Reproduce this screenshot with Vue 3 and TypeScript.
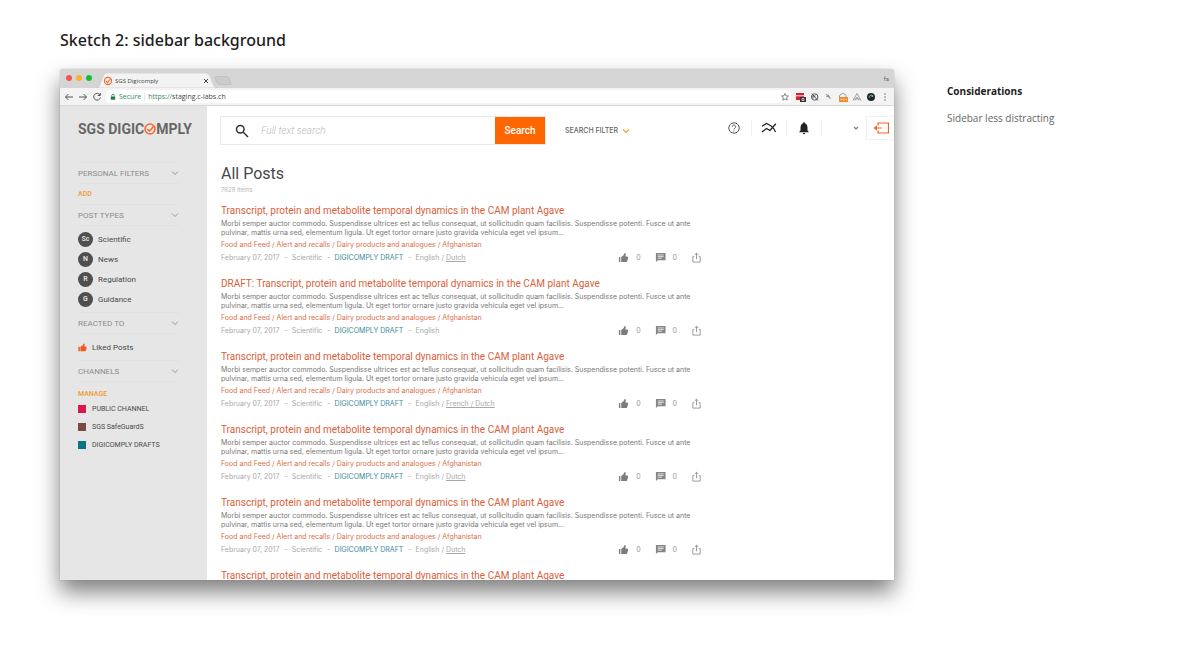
<script setup lang="ts">
import { ref } from 'vue'

interface Post {
  title: string
  languages?: string
  translations?: string
}

const query = ref('')
const baseTitle = 'Transcript, protein and metabolite temporal dynamics in the CAM plant Agave'

const posts: Post[] = [
  { title: baseTitle, languages: 'English', translations: 'Dutch' },
  { title: 'DRAFT: ' + baseTitle, languages: 'English' },
  { title: baseTitle, languages: 'English', translations: 'French / Dutch' },
  { title: baseTitle, languages: 'English', translations: 'Dutch' },
  { title: baseTitle, languages: 'English', translations: 'Dutch' },
  { title: baseTitle },
]

const postTypes = [
  { badge: 'Sc', label: 'Scientific' },
  { badge: 'N', label: 'News' },
  { badge: 'R', label: 'Regulation' },
  { badge: 'G', label: 'Guidance' },
]

const channels = [
  { tone: 'red', label: 'PUBLIC CHANNEL' },
  { tone: 'brown', label: 'SGS SafeGuardS' },
  { tone: 'teal', label: 'DIGICOMPLY DRAFTS' },
]
</script>

<template>
  <div class="page">
    <h1 class="heading">Sketch 2: sidebar background</h1>
    <div class="columns">
      <section class="window">
        <div class="tabs">
          <div class="lights"><i class="close"></i><i class="min"></i><i class="max"></i></div>
          <div class="tab">
            <svg class="tab-shape" viewBox="0 0 122 15" preserveAspectRatio="none"><path d="M0 15C3 15 3.500 13 4.500 10L7 3Q8 0 11 0H110Q113 0 114 3L117.500 12Q119 15 122 15Z" fill="#f3f3f3" stroke="#c4c4c4" stroke-width=".6" /></svg>
            <svg class="favicon" viewBox="0 0 10 10"><circle cx="5" cy="5" r="3.600" /><path d="M2.900 5l1.600 1.600L8 2.500" /></svg>
            <span class="tab-title">SGS Digicomply</span>
            <button class="tab-close" aria-label="Close tab"><svg viewBox="0 0 6 6"><path d="M1 1l4 4M5 1L1 5" /></svg></button>
          </div>
          <svg class="new-tab" viewBox="0 0 18 9"><path d="M1 1.500Q1 .5 2.500 .5H12.500Q14 .5 15 2.500L17 7Q17.500 8.500 16 8.500H5.500Q4 8.500 3.200 7Z" fill="#cbcbcb" stroke="#bdbdbd" stroke-width=".8" /></svg>
          <span class="profile">fs</span>
        </div>
        <div class="toolbar">
          <button aria-label="Back"><svg class="nav" viewBox="0 0 10 10"><path d="M9 5H1.500M4.500 2l-3 3 3 3" /></svg></button>
          <button aria-label="Forward"><svg class="nav" viewBox="0 0 10 10"><path d="M1 5h7.500M5.500 2l3 3-3 3" /></svg></button>
          <button aria-label="Reload"><svg class="nav" viewBox="0 0 10 10"><path d="M8 3A3.400 3.400 0 1 0 8.400 5.500M8.300 1v2.500H5.800" /></svg></button>
          <div class="address">
            <svg class="lock" viewBox="0 0 6 8"><rect x=".8" y="3.500" width="4.400" height="3.200" fill="#1b7f3b" /><path d="M1.700 3.500V2.600a1.300 1.300 0 0 1 2.600 0V3.500" fill="none" stroke="#1b7f3b" stroke-width=".8" /></svg>
            <span class="secure">Secure</span>
            <span class="url"><em>https://</em>staging.c-labs.ch</span>
            <svg class="star" viewBox="0 0 10 10"><path d="M5 1.500l1 2.300 2.500.2-1.900 1.700.6 2.500L5 6.900 2.800 8.200l.6-2.500L1.500 4 4 3.800z" fill="none" stroke="#666" stroke-width=".8" /></svg>
          </div>
          <div class="extensions">
            <svg viewBox="0 0 12 12"><rect x="1" y="2" width="8" height="7" fill="#d6232e" /><path d="M1 4.800h8" stroke="#fff" stroke-width=".9" /><rect x="5" y="6" width="6" height="5" fill="#333" /><path d="M7 7.500h2v2H7z" fill="none" stroke="#eee" stroke-width=".7" /></svg>
            <svg viewBox="0 0 12 12"><circle cx="5.700" cy="6" r="3.200" fill="none" stroke="#555" /><path d="M2.800 2.500l6 7M4 7.500V5h2.500" stroke="#555" fill="none" /></svg>
            <svg viewBox="0 0 12 12"><path d="M3 3l3 3M5 3.500L7.500 8M3 5l4 1.500" stroke="#888" stroke-width=".9" fill="none" /></svg>
            <svg viewBox="0 0 12 12"><path d="M2.500 6.500V4.500L6 2l3 2.500v2" stroke="#999" fill="none" /><rect x="2" y="6" width="9" height="5" rx=".5" fill="#f28b30" /><path d="M3.500 8.500h2M7 7.500v2M8.500 8.500h1.500" stroke="#ffe4c8" stroke-width=".9" /></svg>
            <svg viewBox="0 0 12 12"><path d="M2 9.500L6 2.500l4 7M4 9.500L6 6l2 3.500M3 8h6" stroke="#999" stroke-width=".9" fill="none" /></svg>
            <svg viewBox="0 0 12 12"><circle cx="6" cy="6" r="4" fill="#20252c" /><path d="M4 7q0-3 3-3" stroke="#3da7c9" fill="none" /><circle cx="7.300" cy="5" r="1" fill="#aebc4a" /></svg>
            <svg viewBox="0 0 12 12"><g fill="#777"><circle cx="6" cy="3" r=".8" /><circle cx="6" cy="6" r=".8" /><circle cx="6" cy="9" r=".8" /></g></svg>
          </div>
        </div>

        <div class="app">
          <aside class="sidebar">
            <div class="logo">
              <span>SGS DIGIC</span><svg viewBox="0 0 12 12"><circle cx="6" cy="6" r="5" /><path d="M3.200 6l2.200 2.200L9.500 3.500" /></svg><span>MPLY</span>
            </div>
            <button class="group">PERSONAL FILTERS<svg class="chev" viewBox="0 0 8 6"><path d="M1 1.500l3 3 3-3" /></svg></button>
            <a class="action add" href="#">ADD</a>
            <button class="group">POST TYPES<svg class="chev" viewBox="0 0 8 6"><path d="M1 1.500l3 3 3-3" /></svg></button>
            <ul class="types">
              <li v-for="t in postTypes" :key="t.label"><span class="badge">{{ t.badge }}</span>{{ t.label }}</li>
            </ul>
            <button class="group">REACTED TO<svg class="chev" viewBox="0 0 8 6"><path d="M1 1.500l3 3 3-3" /></svg></button>
            <a class="liked" href="#"><svg viewBox="0 0 12 12"><path d="M.5 5H2.500V11H.5zM3.200 11h5.500q1.500 0 2-1.500l.8-3q.2-2-1.200-2H8.500L9 2Q8.800 .2 7.500 .6L6.500 3 3.200 5z" /></svg>Liked Posts</a>
            <button class="group">CHANNELS<svg class="chev" viewBox="0 0 8 6"><path d="M1 1.500l3 3 3-3" /></svg></button>
            <a class="action manage" href="#">MANAGE</a>
            <ul class="channels">
              <li v-for="c in channels" :key="c.label"><i :class="c.tone"></i>{{ c.label }}</li>
            </ul>
          </aside>

          <main class="main">
            <header class="topbar">
              <form class="search" @submit.prevent>
                <svg class="glass" viewBox="0 0 14 14"><circle cx="5.300" cy="5.300" r="3.800" /><path d="M8.300 8.300L13 13" /></svg>
                <input v-model="query" type="text" placeholder="Full text search" aria-label="Full text search" />
                <button type="submit">Search</button>
              </form>
              <button class="filter">SEARCH FILTER<svg class="chev" viewBox="0 0 8 6"><path d="M1 1.500l3 3 3-3" /></svg></button>
              <nav class="tools">
                <button aria-label="Help"><svg viewBox="0 0 14 14"><circle cx="7" cy="7" r="5.200" fill="none" stroke="#555" /><path d="M5.300 5.700a1.700 1.700 0 1 1 2.600 1.500Q7 7.700 7 8.500M7 9.500v1" fill="none" stroke="#555" /></svg></button>
                <button aria-label="Trends"><svg class="wide" viewBox="0 0 16 14"><path d="M1 5.200L5.500 2.500 9.500 4.500Q12.500 6.500 14.500 11M1 11L5.500 7.500 9 9.500 14.800 2.800" fill="none" stroke="#222" stroke-width="1.300" /></svg></button>
                <button aria-label="Notifications"><svg viewBox="0 0 14 14"><path d="M7 1.200q1 0 1 1 2.500.8 2.500 4V9.500l1.200 1.300v.5H2.300v-.5L3.500 9.500V6.200q0-3.200 2.500-4 0-1 1-1zM5.700 12h2.600q-.3 1.200-1.300 1.200T5.700 12z" fill="#222" /></svg></button>
                <button class="user" aria-label="Account"><svg class="caret" viewBox="0 0 8 6"><path d="M2 2l2 2 2-2" fill="none" stroke="#777" stroke-width="1.200" /></svg></button>
                <button class="logout" aria-label="Log out"><svg viewBox="0 0 18 14"><path d="M6 4.500V2h10.500v10H6V9.500M10 7H4" fill="none" stroke="#f4652a" stroke-width="1.200" /><path d="M1.500 7L5 4.300v5.400z" fill="#f4652a" /></svg></button>
              </nav>
            </header>

            <div class="content">
              <h2>All Posts</h2>
              <p class="count">7628 Items</p>

              <article v-for="(p, i) in posts" :key="i" class="post">
                <h3><a href="#">{{ p.title }}</a></h3>
                <template v-if="p.languages">
                  <p class="excerpt">Morbi semper auctor commodo. Suspendisse ultrices est ac tellus consequat, ut sollicitudin quam facilisis. Suspendisse potenti. Fusce ut ante<br />pulvinar, mattis urna sed, elementum ligula. Ut eget tortor ornare justo gravida vehicula eget vel ipsum...</p>
                  <p class="tags">Food and Feed / Alert and recalls / Dairy products and analogues / Afghanistan</p>
                  <div class="meta">
                    <span>February 07, 2017</span><span class="dash">-</span><span>Scientific</span><span class="dash">-</span><span class="draft">DIGICOMPLY DRAFT</span><span class="dash">-</span>
                    <span>{{ p.languages }}<template v-if="p.translations"> / <a href="#">{{ p.translations }}</a></template></span>
                    <div class="actions">
                      <button class="like"><svg viewBox="0 0 12 12"><path d="M1 5.500h1.500V11H1zM3.500 11h5q1 0 1.500-1l1-3.500q.2-1.700-1.200-1.700H8L8.500 2.500Q8.500 1 7.300 1.200L6 3.500 3.500 5.500z" fill="#7c7c7c" /></svg>0</button>
                      <button class="comment"><svg viewBox="0 0 12 12"><path d="M1 1h10.500v8H3L1 11z" fill="#858585" /><path d="M3 3.200h6.500M3 5h6.500M3 6.800h4.500" stroke="#fff" stroke-width=".8" /></svg>0</button>
                      <button class="share" aria-label="Share"><svg viewBox="0 0 12 12"><path d="M3.500 5H2v6h8V5H8.500M6 8V1.500M4 3.300l2-2 2 2" fill="none" stroke="#888" stroke-width=".9" /></svg></button>
                    </div>
                  </div>
                </template>
              </article>
            </div>
          </main>
        </div>
      </section>

      <section class="notes">
        <h2>Considerations</h2>
        <p>Sidebar less distracting</p>
      </section>
    </div>
  </div>
</template>

<style>
body { margin: 0; background: #fff; }
</style>

<style scoped>
.page { box-sizing: border-box; height: 100vh; min-height: 400px; padding: 28px 0 75px 60px; display: flex; flex-direction: column; font-family: Roboto, "Liberation Sans", sans-serif; overflow: hidden; }
h1, h2, h3, p, ul { margin: 0; padding: 0; font-weight: 400; list-style: none; }
button { font: inherit; color: inherit; background: none; border: 0; padding: 0; margin: 0; display: flex; align-items: center; }
a { color: inherit; text-decoration: none; }
svg { display: block; flex: none; }
.heading { font: 500 16px/24px "Noto Sans", "Open Sans", sans-serif; color: #1d1d1d; margin-bottom: 17px; }
.columns { flex: 1; min-height: 0; display: grid; grid-template-columns: minmax(0, 1fr) 253px; gap: 53px; }

.window { display: flex; flex-direction: column; min-height: 0; border-radius: 3px 3px 0 0; background: #fff; box-shadow: 0 0 1px #777, 0 12px 22px rgba(0, 0, 0, .5); }
.tabs { display: flex; align-items: flex-end; height: 19px; background: #d5d5d5; border-radius: 3px 3px 0 0; }
.lights { display: flex; gap: 4px; padding: 0 0 7px 6px; }
.lights i { width: 6px; height: 6px; border-radius: 50%; }
.close { background: #f4534f; }
.min { background: #f6b42e; }
.max { background: #14bd35; }
.tab { display: grid; grid-template-columns: 10px 1fr 6px; gap: 2px; align-items: center; width: 122px; height: 15px; margin-left: 4px; padding: 0 9px 0 7px; box-sizing: border-box; position: relative; font-size: 6px; color: #444; }
.tab > * { position: relative; }
.tab .tab-shape { position: absolute; inset: 0; width: 100%; height: 100%; }
.favicon { width: 10px; height: 10px; fill: none; stroke: #ee6a35; stroke-width: 1.1; }
.tab-close svg { width: 6px; height: 6px; stroke: #444; }
.tab-title { font-family: "Open Sans", sans-serif; white-space: nowrap; }
.new-tab { width: 18px; height: 9px; margin: 0 0 3px -4px; }
.profile { margin: 0 5px 5px auto; font-size: 6px; line-height: 8px; color: #555; }
.toolbar { display: flex; align-items: center; gap: 4px; height: 17px; padding: 0 3px 0 4px; background: #f3f3f3; border-bottom: 1px solid #d8d8d8; }
.nav { width: 10px; height: 10px; fill: none; stroke: #555; stroke-width: 1; }
.address { flex: 1; display: flex; align-items: center; height: 13px; background: #fff; border-radius: 2px; padding: 0 1px 0 4px; font: 7px/13px "Open Sans", sans-serif; color: #444; }
.lock { width: 6px; height: 8px; margin-right: 3px; }
.secure { color: #2e8b57; padding-right: 3px; margin-right: 3px; border-right: 1px solid #e6e6e6; line-height: 8px; }
.url em { font-style: normal; color: #2e8b57; }
.star { width: 10px; height: 10px; margin-left: auto; }
.extensions { display: flex; gap: 2px; }
.extensions svg { width: 12px; height: 12px; }

.app { flex: 1; min-height: 0; display: grid; grid-template-columns: 147px minmax(0, 1fr); overflow: hidden; }
.sidebar { background: #e6e6e6; padding: 12px 28px 0 18px; color: #4a4a4a; font-size: 8px; overflow: hidden; }
.logo { display: flex; align-items: center; height: 22px; margin-bottom: 22px; white-space: pre; font: 700 14px/22px Roboto, sans-serif; color: #666; }
.logo svg { width: 12px; height: 12px; fill: none; stroke: #f26a30; stroke-width: 1.5; }
.group { justify-content: space-between; width: 100%; height: 22px; color: #8c8c8c; font-size: 8px; border: solid #e1e1e1; border-width: 1px 0; }
.chev { width: 8px; height: 6px; fill: none; stroke: #999; stroke-width: 1; }
.action { display: block; color: #f09a30; font-size: 7px; font-weight: 500; line-height: 10px; }
.add { padding: 5px 0; }
.types { padding: 3px 0; }
.types li { display: flex; align-items: center; gap: 5px; height: 20px; }
.badge { width: 15px; height: 15px; border-radius: 50%; background: #4f4f4f; color: #ddd; font-size: 7px; font-weight: 700; line-height: 15px; text-align: center; }
.liked { display: flex; align-items: center; gap: 5px; height: 26px; }
.liked svg { width: 9px; height: 9px; fill: #f15a22; }
.manage { padding-top: 7px; margin-bottom: 1px; }
.channels li { display: flex; align-items: center; gap: 6px; height: 18px; font-size: 7px; }
.channels i { width: 8px; height: 8px; }
.red { background: #d9194e; }
.brown { background: #7b4a42; }
.teal { background: #0d7484; }

.main { padding: 10px 0 0 13px; overflow: hidden; }
.topbar { display: flex; align-items: flex-start; height: 30px; }
.search { display: flex; align-items: center; width: 326px; height: 29px; box-sizing: border-box; border: 1px solid #e9e9e9; padding-left: 14px; flex: none; }
.glass { width: 14px; height: 14px; fill: none; stroke: #333; stroke-width: 1.5; }
.search input { flex: 1; min-width: 0; border: 0; outline: 0; padding: 0 0 0 12px; font: italic 300 10px/20px Roboto, sans-serif; color: #444; background: none; }
.search input::placeholder { color: #b9b9b9; opacity: 1; }
.search button { width: 50px; height: 27px; flex: none; justify-content: center; background: #ff6600; color: #fff; font-size: 10px; font-weight: 500; }
.filter { gap: 4px; height: 29px; margin-left: 19px; font: 500 7px/10px Inter, Roboto, sans-serif; color: #666; white-space: nowrap; }
.filter .chev { stroke: #f5a030; stroke-width: 1.2; }
.tools { display: flex; align-items: center; margin-left: auto; }
.tools button { width: 35px; height: 16px; justify-content: center; border-right: 1px solid #f0f0f0; box-sizing: border-box; }
.tools svg { width: 14px; height: 14px; }
.tools .wide { width: 16px; }
.tools .user { width: 44px; justify-content: flex-end; padding-right: 6px; border: 0; }
.tools .caret { width: 8px; height: 6px; }
.tools .logout { width: 28px; height: 24px; border: 1px solid #f0f0f0; border-right: 0; }
.tools .logout svg { width: 18px; }
.content { padding-left: 1px; font-family: Inter, Roboto, sans-serif; }
.content h2 { margin-top: 17px; font: 16px/22px Roboto, sans-serif; color: #484848; }
.count { font-size: 6px; line-height: 10px; color: #b5b5b5; margin-bottom: 10px; }
.post { height: 73px; width: 481px; }
.post h3 { font: 10px/12px Roboto, sans-serif; margin-bottom: 2px; color: #d9603a; white-space: nowrap; }
.excerpt { font-size: 7px; line-height: 9px; color: #777; white-space: nowrap; }
.tags { font-size: 7px; line-height: 12px; margin-top: 2px; color: #d9704a; }
.meta { display: flex; align-items: center; height: 12px; font-size: 7px; color: #a8a8a8; white-space: nowrap; }
.dash { padding: 0 4px 0 5px; }
.draft { color: #3b8a99; }
.meta a { text-decoration: underline; }
.actions { display: flex; margin-left: auto; color: #999; }
.actions button { gap: 7px; }
.actions svg { width: 11px; height: 11px; }
.comment { margin: 0 14px; }

.notes { padding-top: 14px; font-family: "Open Sans", sans-serif; }
.notes h2 { font-size: 10px; font-weight: 700; line-height: 16px; color: #222; }
.notes p { margin-top: 11px; font-size: 10px; line-height: 16px; color: #666; }
</style>
